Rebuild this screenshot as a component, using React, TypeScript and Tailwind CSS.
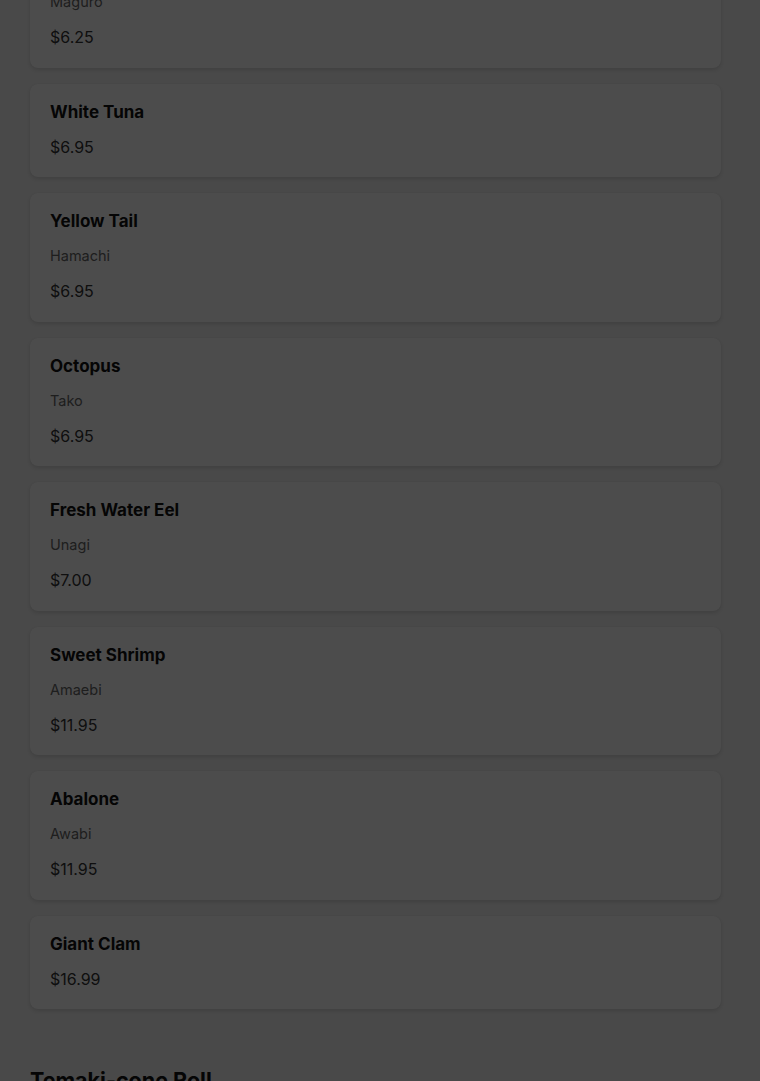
import React from "react";

type Item = { name: string; jp?: string; price: string };

const items: Item[] = [
  { name: "Tuna", jp: "Maguro", price: "$6.25" },
  { name: "White Tuna", price: "$6.95" },
  { name: "Yellow Tail", jp: "Hamachi", price: "$6.95" },
  { name: "Octopus", jp: "Tako", price: "$6.95" },
  { name: "Fresh Water Eel", jp: "Unagi", price: "$7.00" },
  { name: "Sweet Shrimp", jp: "Amaebi", price: "$11.95" },
  { name: "Abalone", jp: "Awabi", price: "$11.95" },
  { name: "Giant Clam", price: "$16.99" },
];

const MenuCard = ({ item }: { item: Item }) => (
  <div className="bg-white rounded-lg shadow-[0_2px_4px_rgba(0,0,0,0.12),0_0_1px_rgba(0,0,0,0.08)] px-5 pt-4 pb-[18.5px] flex flex-col gap-[11px]">
    <h3 className="text-[17px] leading-6 font-bold text-[#111]">{item.name}</h3>
    {item.jp && <p className="text-[14.5px] leading-6 text-[#666]">{item.jp}</p>}
    <p className="text-[16px] leading-6 text-[#333]">{item.price}</p>
  </div>
);

export default function App() {
  return (
    <div className="relative h-[1081px] overflow-hidden bg-[#f4f4f4] font-['Inter',sans-serif]">
      <div className="w-[691px] ml-[30px] -mt-[61px] flex flex-col gap-4">
        {items.map((item) => (
          <MenuCard key={item.name} item={item} />
        ))}
        <h2 className="mt-[39px] text-[21.5px] leading-8 font-bold text-[#111]">Temaki-cone Roll</h2>
      </div>
      <div className="absolute inset-0 bg-black/70" />
    </div>
  );
}
